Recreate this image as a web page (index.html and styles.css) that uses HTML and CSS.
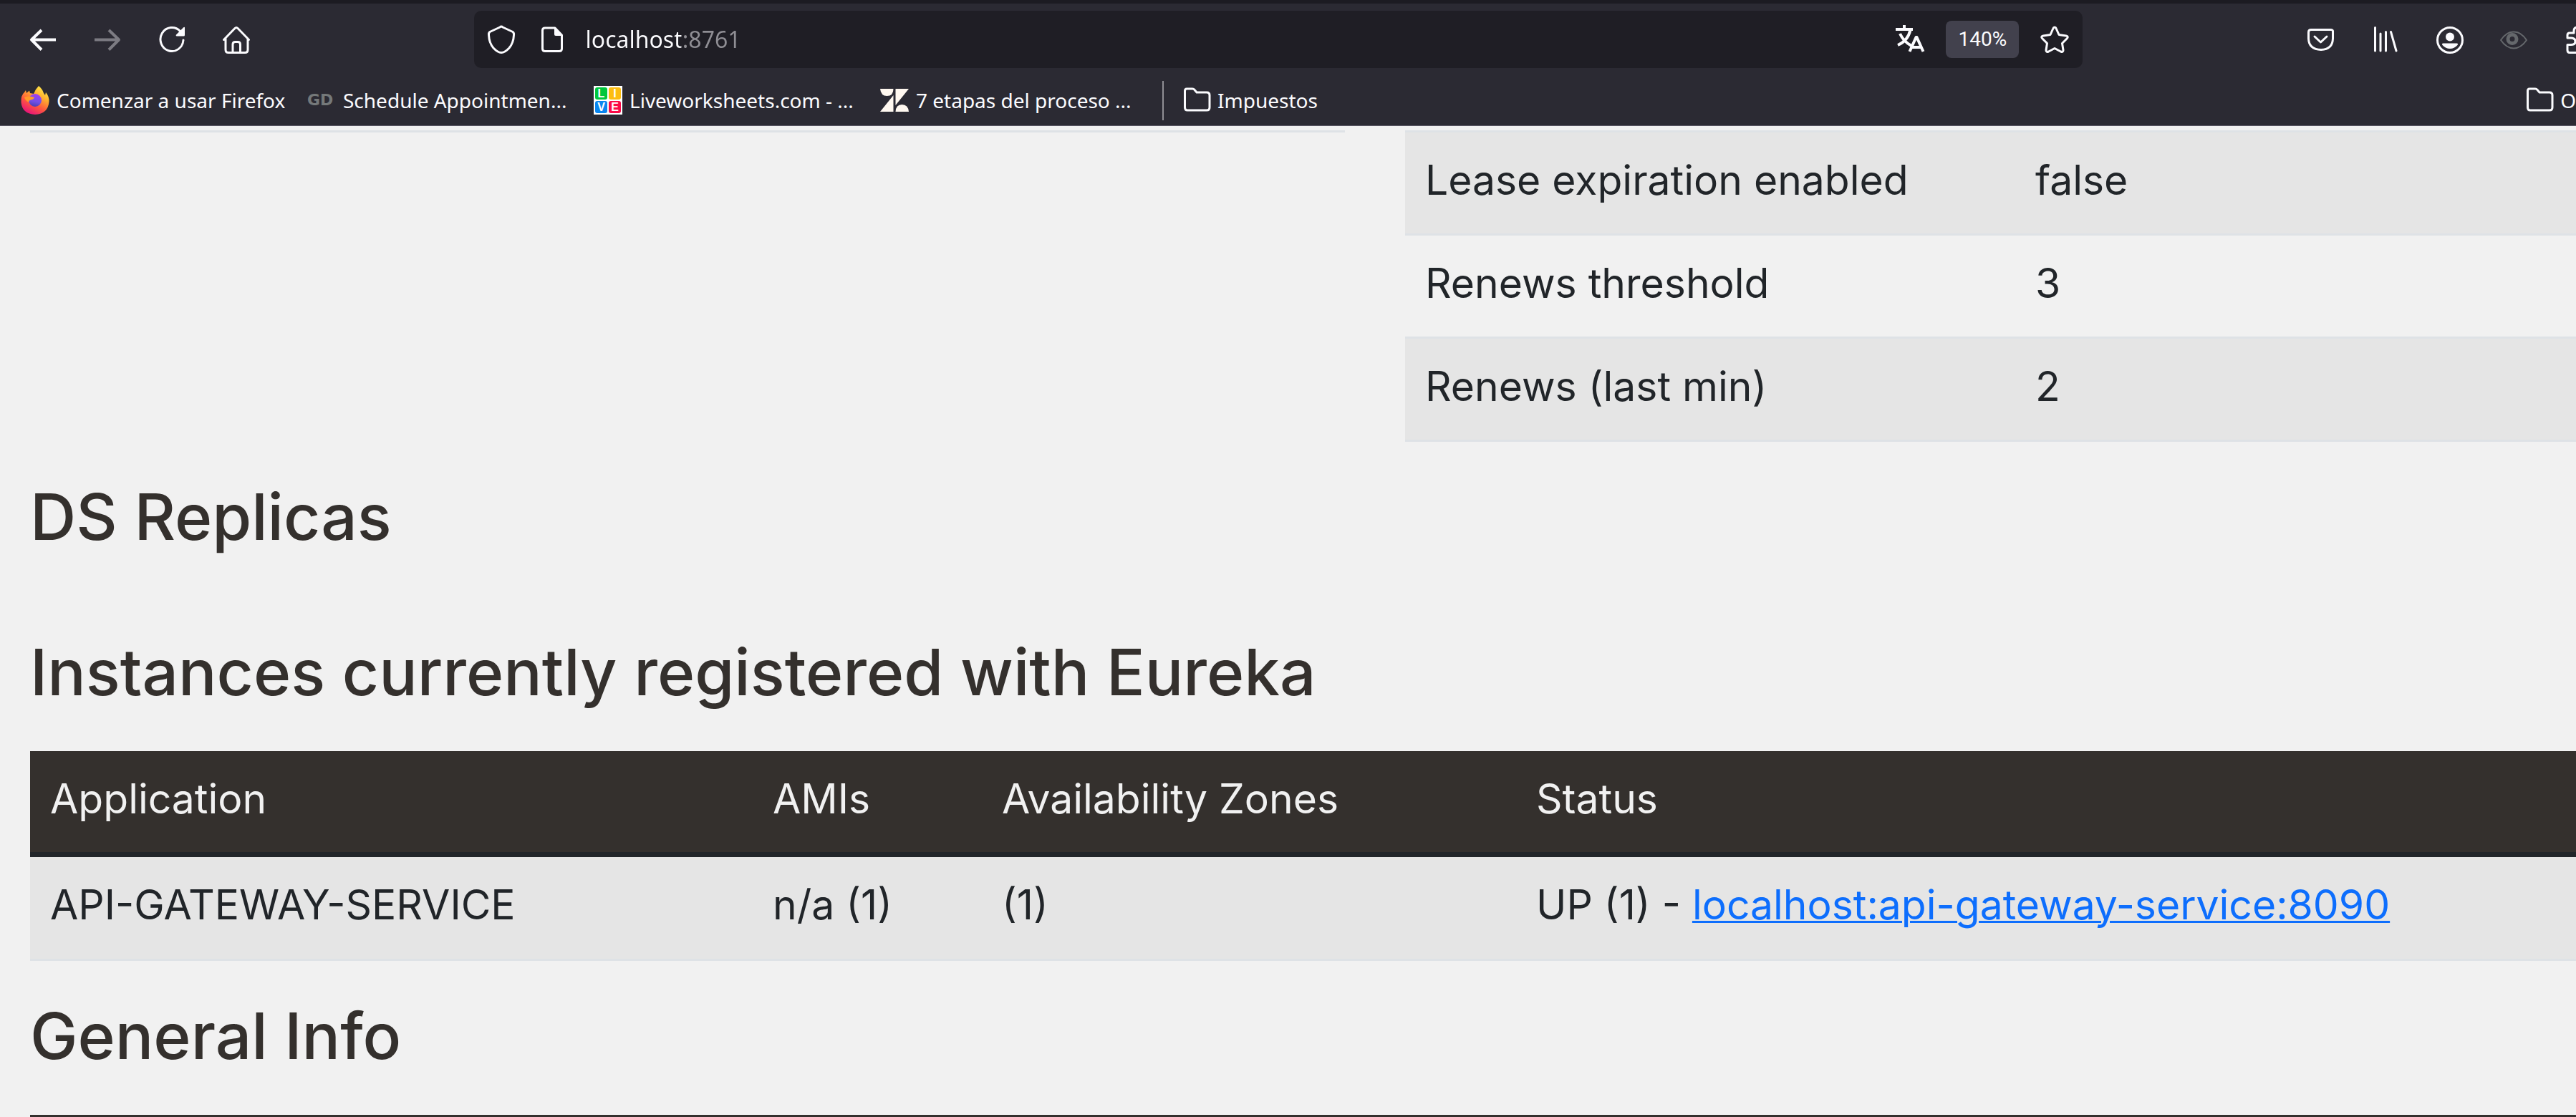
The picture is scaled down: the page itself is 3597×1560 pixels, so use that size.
FILE: index.html
```html
<!DOCTYPE html>
<html lang="en">
<head>
<meta charset="utf-8">
<title>Eureka</title>
<link rel="stylesheet" href="styles.css">
</head>
<body>
<header class="chrome">
  <nav class="toolbar" aria-label="Navigation">
    <div class="tools">
      <button class="tool" aria-label="Back"><svg class="icon" viewBox="0 0 40 40"><path d="M38 20.5H4M18 7L4 20.5L18 34.500"/></svg></button>
      <button class="tool dim" aria-label="Forward"><svg class="icon" viewBox="0 0 40 40"><path d="M2 20.500H36M22 7L36 20.500L22 34.500"/></svg></button>
      <button class="tool" aria-label="Reload"><svg class="icon thin" viewBox="0 0 40 40"><path d="M36 21A16 16.500 0 1 1 31.500 8.500"/><path class="solid" d="M38 4V14Q38 15.500 36.500 15.500H27Q25 15 26 13.500L36 3.500Q38 2 38 4Z"/></svg></button>
      <button class="tool" aria-label="Home"><svg class="icon thin" viewBox="0 0 40 40"><path d="M2.500 20.500L18 4.500Q20 2.500 22 4.500L37.500 20.500M5 19V34.500Q5 38.500 9 38.500H32Q36 38.500 36 34.500V19M15 38V27Q15 23.500 18.500 23.500H22Q25.500 23.500 25.500 27V38"/></svg></button>
    </div>
    <div class="urlbar">
      <svg class="icon thin" viewBox="0 0 40 40"><path d="M20 2Q21 2 22 3L36 9.500Q38 11 37.500 14Q37 25 31 32Q25 38.500 20 38.500Q15 38.500 9 32Q3 25 2.500 14Q2 11 4 9.500L18 3Q19 2 20 2Z"/></svg>
      <svg class="icon thin page-icon" viewBox="0 0 40 40"><path d="M10 4H24L33.500 14V33Q33.500 36.500 30 36.500H10Q6.500 36.500 6.500 33V7.500Q6.500 4 10 4Z"/><path class="solid" d="M23 3L34.500 15H25Q23 15 23 13Z"/></svg>
      <input class="url" type="text" value="localhost:8761" aria-label="Address">
      <svg class="icon translate" viewBox="0 0 40 40"><path d="M0 6H24M12 0V6M20.500 7Q17 22 3 28M6 12Q11 23 22 29M19.500 37L28.500 17H29.500L38.500 37M22.500 31H35.500"/></svg>
      <button class="zoom">140%</button>
      <svg class="icon thin" viewBox="0 0 40 40"><path d="M20 3Q21.500 3 22 4.500L26 13.500L36 15Q40 16 37 19L30.500 25.500L32 35Q32 38.500 28.500 37L20 32.500L11.500 37Q8 38.500 8 35L9.500 25.500L3 19Q0 16 4 15L14 13.500L18 4.500Q18.500 3 20 3Z"/></svg>
    </div>
    <div class="tools tools-end">
      <button class="tool" aria-label="Pocket"><svg class="icon thin" viewBox="0 0 40 40"><path d="M7 6.500H35Q38 6.500 37.500 10V19Q37 34 21 34.500Q4 34 3.500 19V10Q3.500 6.500 7 6.500ZM12 16L20.500 24L29 16"/></svg></button>
      <button class="tool" aria-label="Library"><svg class="icon thin" viewBox="0 0 40 40"><path d="M6.500 3.500V36M14 12V36M21.500 9.500V36M28.500 9.500L36 36"/></svg></button>
      <button class="tool" aria-label="Account"><svg class="icon thin" viewBox="0 0 40 40"><circle cx="21" cy="21" r="17.500"/><circle class="solid" cx="21" cy="16.500" r="6"/><path class="solid" d="M11.500 25.500H30.500Q33 26 31.500 28Q27 33 21 33Q15 33 10.500 28Q9 26 11.500 25.500Z"/></svg></button>
      <button class="tool" aria-label="Viewer"><svg class="icon eye" viewBox="0 0 40 40"><path d="M2 21Q10 9 20 9.500Q30 9 38 21Q30 32.500 20 32.500Q10 32.500 2 21Z"/><circle class="iris" cx="18" cy="19.500" r="6"/></svg></button>
      <button class="tool tool-cut" aria-label="Extensions"><svg class="icon thin" viewBox="0 0 40 40"><path d="M6 11H12V8Q12 3 17 3Q22 3 22 8V11H31V38.500H6Q3 38.500 3 35V27.500H8Q14 27.500 14 23Q14 18 8 18H3V14Q3 11 6 11Z"/></svg></button>
    </div>
  </nav>
  <nav class="bookmarks" aria-label="Bookmarks">
    <a class="bookmark" href="#"><svg class="icon logo" viewBox="0 0 40 40">
      <defs>
        <linearGradient id="flame" x1="0.850" y1="0" x2="0.300" y2="1"><stop offset="0" stop-color="#fff44f"/><stop offset="0.350" stop-color="#ffb02e"/><stop offset="0.650" stop-color="#ff5a3c"/><stop offset="1" stop-color="#e6107c"/></linearGradient>
        <linearGradient id="globe" x1="0.600" y1="0" x2="0.400" y2="1"><stop offset="0" stop-color="#a53cf0"/><stop offset="0.600" stop-color="#7050e8"/><stop offset="1" stop-color="#4a3fb0"/></linearGradient>
      </defs>
      <path fill="url(#flame)" d="M25 0Q30 4 32 10L34 13L35 9Q40 15 39.500 22Q38 39 20 40Q2 39 .5 23Q0 13 5 9L7 6L8 10L12 6.500L13 10L18 11Q20 5 25 0Z"/>
      <circle fill="url(#globe)" cx="20" cy="20" r="9"/>
      <path fill="#ff9a28" d="M5 16Q10 13 19 16Q18 19 14 19.500Q11 20 11 23Q6 20 5 16Z"/></svg>
      <span>Comenzar a usar Firefox</span></a>
    <a class="bookmark" href="#"><b class="gd">GD</b><span>Schedule Appointmen...</span></a>
    <a class="bookmark" href="#"><b class="live"><i class="green">L</i><i class="amber">I</i><i class="blue">V</i><i class="red">E</i></b><span>Liveworksheets.com - ...</span></a>
    <a class="bookmark" href="#"><svg class="icon logo" viewBox="0 0 40 40"><path fill="#fff8f0" d="M0 4H18.500Q18.500 14 9.500 14Q1 14 0 4ZM18.500 13V36H0ZM21.500 4H40L21.500 27ZM21.500 36Q22 26 30.500 26Q39 26 40 36Z"/></svg><span>7 etapas del proceso ...</span></a>
    <span class="divider"></span>
    <a class="folder" href="#"><svg class="icon thin" viewBox="0 0 40 40"><path d="M5 4H13Q15 4 16 5.500L19 9H33Q37 9 37 13V30Q37 34 33 34H6Q2.500 34 2.500 30V7Q2.500 4 5 4Z"/></svg><span>Impuestos</span></a>
    <a class="folder folder-end" href="#"><svg class="icon thin" viewBox="0 0 40 40"><path d="M5 4H13Q15 4 16 5.500L19 9H33Q37 9 37 13V30Q37 34 33 34H6Q2.500 34 2.500 30V7Q2.500 4 5 4Z"/></svg><span>O</span></a>
  </nav>
</header>
<main class="content">
  <div class="status">
    <div class="status-left"></div>
    <table class="grid facts">
      <colgroup><col class="fact-name"><col></colgroup>
      <tbody>
        <tr><td>Lease expiration enabled</td><td>false</td></tr>
        <tr><td>Renews threshold</td><td>3</td></tr>
        <tr><td>Renews (last min)</td><td>2</td></tr>
      </tbody>
    </table>
  </div>
  <h1 class="replicas">DS Replicas</h1>
  <h1>Instances currently registered with Eureka</h1>
  <table class="grid instances">
    <colgroup><col class="col-app"><col class="col-ami"><col class="col-zone"><col></colgroup>
    <thead><tr><th>Application</th><th>AMIs</th><th>Availability Zones</th><th>Status</th></tr></thead>
    <tbody><tr><td>API-GATEWAY-SERVICE</td><td>n/a (1)</td><td>(1)</td><td>UP (1) - <a href="#">localhost:api-gateway-service:8090</a></td></tr></tbody>
  </table>
  <h1>General Info</h1>
  <div class="next-table"></div>
</main>
</body>
</html>
```
FILE: styles.css
```css
* { box-sizing: border-box; }

body {
  margin: 0;
  background: #f1f1f1;
  color: #212529;
  font: 57px/85px Inter, "Liberation Sans", sans-serif;
}

button { border: 0; padding: 0; background: none; color: inherit; font: inherit; }

/* Browser chrome */
.chrome {
  overflow: hidden;
  border-top: 5px solid #1c1b22;
  border-bottom: 1px solid #5b5966;
  background: #2b2a33;
  color: #fbfbfe;
  font: 28px/40px "Noto Sans", "Open Sans", sans-serif;
}

.toolbar { display: flex; align-items: center; height: 100px; padding-left: 15px; }
.tools { display: flex; }
.tool { display: flex; width: 90px; height: 80px; align-items: center; justify-content: center; }
.tool-cut { width: 42px; padding-left: 27px; justify-content: flex-start; overflow: hidden; }
.dim { color: #7c7b82; }

.icon { flex: none; width: 40px; height: 40px; fill: none; stroke: currentColor; stroke-width: 4; stroke-linejoin: round; }
.thin { stroke-width: 3; stroke-linecap: round; }
.icon .solid { fill: currentColor; stroke: none; }
.logo { stroke: none; }
.eye { color: #65686c; stroke-width: 2; }
.eye .iris { stroke-width: 5; }
.translate { overflow: visible; }

.urlbar {
  display: flex;
  flex: 1;
  align-items: center;
  height: 80px;
  margin: 0 8%;
  padding: 0 19px 0 18px;
  border-radius: 10px;
  background: #1f1e25;
}
.page-icon { margin: 0 27px 0 31px; }
.url {
  flex: 1;
  min-width: 0;
  height: 50px;
  padding: 0;
  border: 0;
  outline: 0;
  background: linear-gradient(90deg, #fbfbfe 133px, #8f8e94 133px) text;
  color: transparent;
  font: 32px/50px "Noto Sans", "Open Sans", sans-serif;
}
.zoom {
  width: 102px;
  height: 52px;
  margin: 0 30px;
  border-radius: 8px;
  background: #42414d;
  font: 28px/52px Roboto, sans-serif;
}

.bookmarks { display: flex; align-items: center; height: 70px; padding-left: 29px; white-space: nowrap; }
.bookmarks a { display: flex; align-items: center; color: inherit; text-decoration: none; }
.bookmark { gap: 10px; width: 370px; margin-right: 30px; }
.folder { gap: 8px; }
.folder-end { margin-left: auto; }
.divider { width: 2px; height: 55px; margin: 0 27px 0 -6px; background: #8f8e94; }

.gd { width: 40px; color: #75797a; font: bold 22px/40px "DejaVu Sans", sans-serif; }
.live { display: grid; grid-template-columns: 17px 17px; gap: 2px; width: 40px; height: 40px; padding: 2px; background: #fff; }
.live i { height: 17px; border-radius: 3px; color: #fff; font: bold 16px/17px "Liberation Sans", sans-serif; text-align: center; }
.green { background: #00c73c; }
.amber { background: #fdbd10; }
.blue { background: #0a86f0; }
.red { background: #fb0a48; }

/* Eureka page */
.content { display: flex; flex-direction: column; padding: 6px 0 0 42px; }
.status { display: grid; grid-template-columns: 1836fr 1635fr; gap: 84px; }
.status-left { border-top: 3px solid #dee2e6; }

.grid { width: 100%; border-collapse: separate; border-spacing: 0; table-layout: fixed; }
.grid td { padding: 24px 28px 32px; border-bottom: 3px solid #dee2e6; }
.grid th { padding: 24px 28px 32px; border-bottom: 7px solid #212529; background: #34302d; color: #f1f1f1; font-weight: 400; text-align: left; }
.grid tbody tr:nth-child(odd) { background: #e5e5e5; }
.grid a { color: #0d6efd; text-decoration-thickness: 3px; }
.facts { border-top: 3px solid #dee2e6; }
.instances td { padding-bottom: 33px; }
.fact-name { width: 852px; }
.col-app { width: 1009px; }
.col-ami { width: 320px; }
.col-zone { width: 746px; }

h1 { margin: 54px 0 60px; color: #34302d; font-size: 89px; line-height: 101px; font-weight: 500; }
.replicas { margin-bottom: 62px; }
.next-table { height: 3px; background: #34302d; }
```
